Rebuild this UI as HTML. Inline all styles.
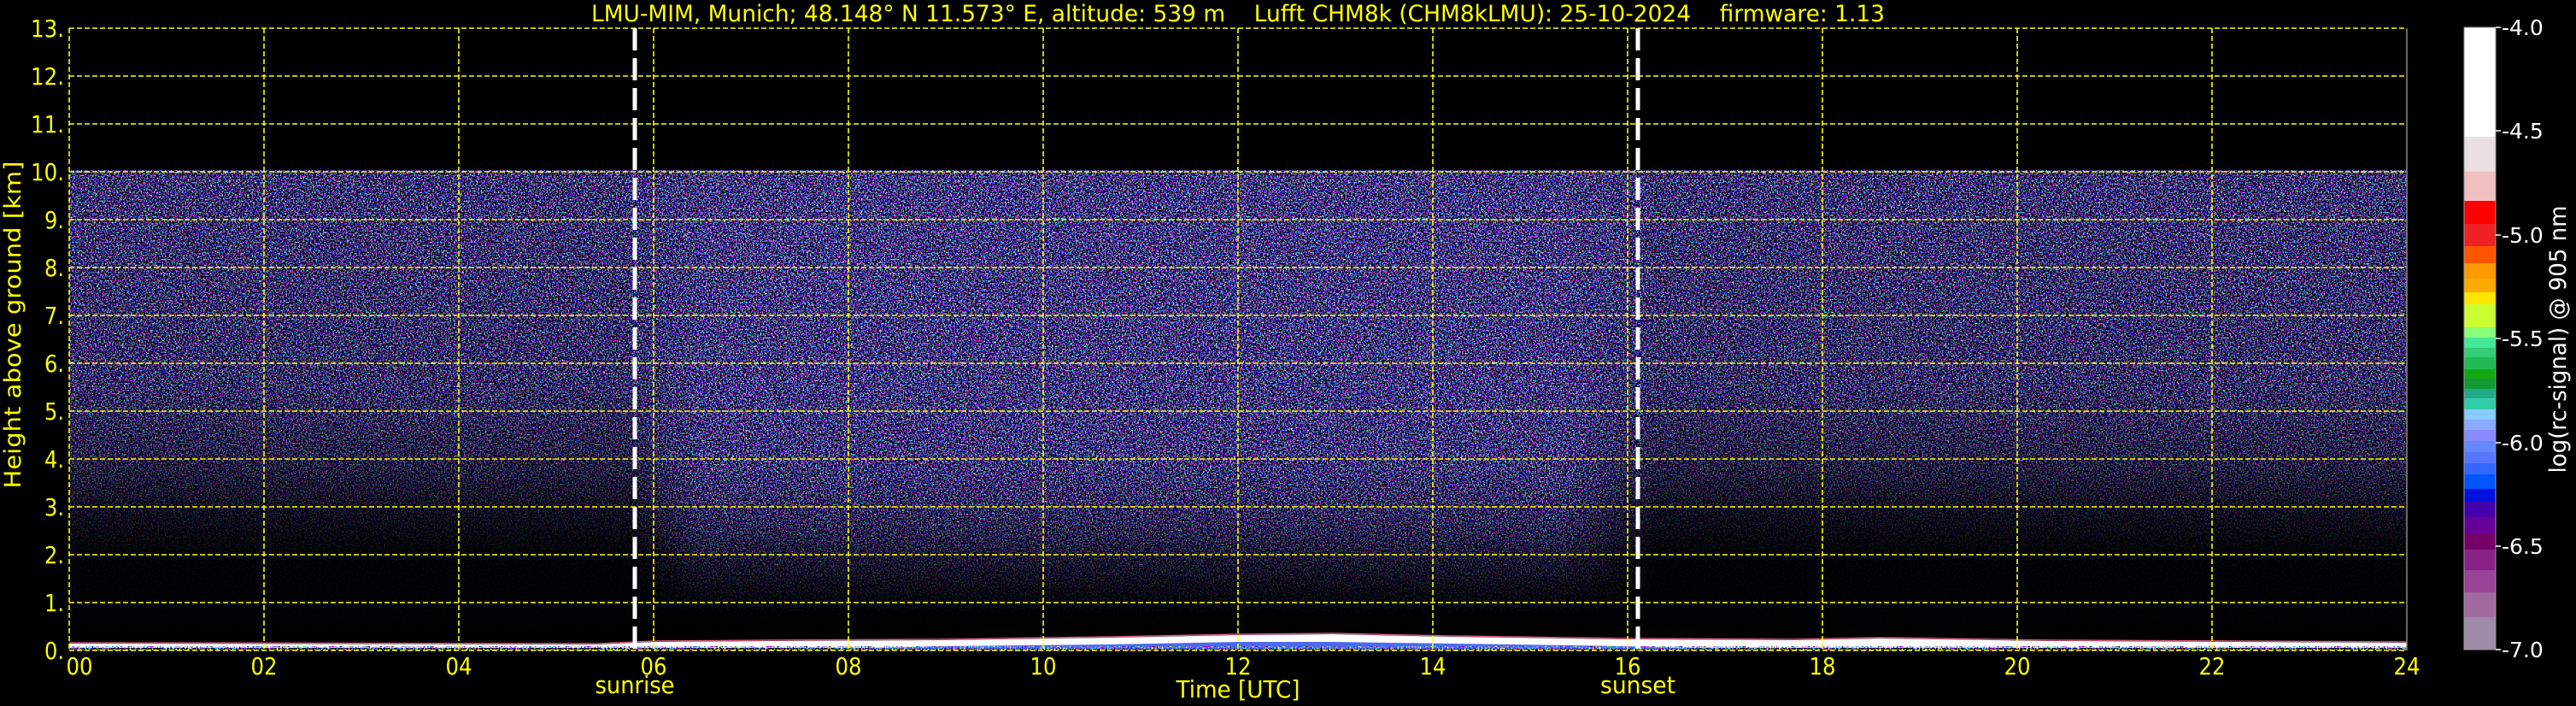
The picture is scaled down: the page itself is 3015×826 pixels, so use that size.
<!DOCTYPE html>
<html><head><meta charset="utf-8"><style>
html,body{margin:0;padding:0;background:#000;width:3015px;height:826px;overflow:hidden}
svg{display:block}
text{font-family:"DejaVu Sans","Liberation Sans",sans-serif}
</style></head><body>
<svg width="3015" height="826" viewBox="0 0 3015 826" xmlns="http://www.w3.org/2000/svg">
<defs>
<filter id="nz" filterUnits="userSpaceOnUse" x="81" y="199" width="2736" height="562" primitiveUnits="userSpaceOnUse" color-interpolation-filters="sRGB">
<feTurbulence type="fractalNoise" baseFrequency="0.6" numOctaves="2" seed="7" result="t"/>
<feColorMatrix in="t" type="matrix" values="3.2 0 0 0 -1.15  0 3.2 0 0 -1.2  0 0 3.2 0 -0.45  0 0 0 10 -4.5"/>
</filter>
<filter id="nz2" filterUnits="userSpaceOnUse" x="81" y="756" width="2736" height="5" primitiveUnits="userSpaceOnUse" color-interpolation-filters="sRGB">
<feTurbulence type="fractalNoise" baseFrequency="0.5" numOctaves="1" seed="3"/>
<feColorMatrix type="matrix" values="4 0 0 0 -1.5  0 4 0 0 -1.5  0 0 4 0 -1  0 0 0 6 -2.5"/>
</filter>
<linearGradient id="gN" gradientUnits="userSpaceOnUse" x1="0" y1="201" x2="0" y2="761">
<stop offset="0" stop-color="#fff"/>
<stop offset="0.45" stop-color="#e0e0e0"/>
<stop offset="0.6" stop-color="#999"/>
<stop offset="0.7" stop-color="#4a4a4a"/>
<stop offset="0.8" stop-color="#0e0e0e"/>
<stop offset="1" stop-color="#000"/>
</linearGradient>
<linearGradient id="gD" gradientUnits="userSpaceOnUse" x1="0" y1="201" x2="0" y2="761">
<stop offset="0" stop-color="#fff"/>
<stop offset="0.6" stop-color="#eee"/>
<stop offset="0.75" stop-color="#999"/>
<stop offset="0.87" stop-color="#2a2a2a"/>
<stop offset="0.93" stop-color="#000"/>
<stop offset="1" stop-color="#000"/>
</linearGradient>
<linearGradient id="hz" gradientUnits="userSpaceOnUse" x1="81" y1="0" x2="2817" y2="0">
<stop offset="0" stop-color="#000"/>
<stop offset="0.24" stop-color="#000"/>
<stop offset="0.27" stop-color="#fff"/>
<stop offset="0.64" stop-color="#fff"/>
<stop offset="0.68" stop-color="#000"/>
<stop offset="1" stop-color="#000"/>
</linearGradient>
<mask id="m" maskUnits="userSpaceOnUse" x="81" y="199" width="2736" height="562">
<rect x="81" y="199" width="2736" height="562" fill="url(#gN)"/>
</mask>
<mask id="m2" maskUnits="userSpaceOnUse" x="81" y="199" width="2736" height="562">
<rect x="81" y="199" width="2736" height="562" fill="url(#gD)"/>
</mask>
<mask id="mh" maskUnits="userSpaceOnUse" x="81" y="199" width="2736" height="562">
<rect x="81" y="199" width="2736" height="562" fill="url(#hz)"/>
</mask>
</defs>
<rect width="3015" height="826" fill="#000"/>
<rect x="81" y="201" width="2736" height="560" fill="#fff" filter="url(#nz)" mask="url(#m)"/>
<g mask="url(#mh)"><rect x="81" y="201" width="2736" height="560" fill="#fff" filter="url(#nz)" mask="url(#m2)"/></g>
<path d="M81,758 L81,753 L700,754 L766,751 L900,750 L1100,749 L1300,746 L1450,743 L1560,742 L1700,745 L1900,748 L2100,749 L2200,747 L2400,750 L2817,752 L2817,758 Z" fill="#fff"/>
<path d="M1000,759 L1100,756 L1300,754 L1450,751 L1560,751 L1700,753 L1900,756 L2000,759 Z" fill="#4a6af0"/>
<polyline points="81,752 700,753 766,750 900,749 1100,748 1300,745 1450,742 1560,741 1700,744 1900,747 2100,748 2200,746 2400,749 2817,751" fill="none" stroke="#d05a7a" stroke-width="1.5"/>
<rect x="81" y="757" width="2736" height="4" fill="#fff" filter="url(#nz2)"/>
<g stroke="#ffff00" stroke-width="1.6" stroke-dasharray="6,3" fill="none">
<path d="M81,33H2817M81,89H2817M81,145H2817M81,201H2817M81,257H2817M81,313H2817M81,369H2817M81,425H2817M81,481H2817M81,537H2817M81,593H2817M81,649H2817M81,705H2817M81,761H2817"/>
<path d="M81,33V761M309,33V761M537,33V761M765,33V761M993,33V761M1221,33V761M1449,33V761M1677,33V761M1905,33V761M2133,33V761M2361,33V761M2589,33V761"/>
</g>
<line x1="2817" y1="33" x2="2817" y2="761" stroke="#8a8a70" stroke-width="1.5"/>
<g stroke="#fff" stroke-width="5" stroke-dasharray="26,9">
<line x1="743" y1="33" x2="743" y2="761"/>
<line x1="1917" y1="33" x2="1917" y2="761"/>
</g>
<text x="692" y="25" fill="#ffff00" font-size="27" textLength="1514" lengthAdjust="spacingAndGlyphs" xml:space="preserve">LMU-MIM, Munich; 48.148° N 11.573° E, altitude: 539 m    Lufft CHM8k (CHM8kLMU): 25-10-2024    firmware: 1.13</text>
<g fill="#ffff00" font-size="28" text-anchor="end">
<text x="75" y="43" textLength="39" lengthAdjust="spacingAndGlyphs">13.</text>
<text x="75" y="99" textLength="39" lengthAdjust="spacingAndGlyphs">12.</text>
<text x="75" y="155" textLength="39" lengthAdjust="spacingAndGlyphs">11.</text>
<text x="75" y="211" textLength="39" lengthAdjust="spacingAndGlyphs">10.</text>
<text x="75" y="267" textLength="23" lengthAdjust="spacingAndGlyphs">9.</text>
<text x="75" y="323" textLength="23" lengthAdjust="spacingAndGlyphs">8.</text>
<text x="75" y="379" textLength="23" lengthAdjust="spacingAndGlyphs">7.</text>
<text x="75" y="435" textLength="23" lengthAdjust="spacingAndGlyphs">6.</text>
<text x="75" y="491" textLength="23" lengthAdjust="spacingAndGlyphs">5.</text>
<text x="75" y="547" textLength="23" lengthAdjust="spacingAndGlyphs">4.</text>
<text x="75" y="603" textLength="23" lengthAdjust="spacingAndGlyphs">3.</text>
<text x="75" y="659" textLength="23" lengthAdjust="spacingAndGlyphs">2.</text>
<text x="75" y="715" textLength="23" lengthAdjust="spacingAndGlyphs">1.</text>
<text x="75" y="771" textLength="23" lengthAdjust="spacingAndGlyphs">0.</text>
</g>
<text transform="translate(24,380) rotate(-90)" fill="#ffff00" font-size="27" text-anchor="middle" textLength="383" lengthAdjust="spacingAndGlyphs">Height above ground [km]</text>
<g fill="#ffff00" font-size="28" text-anchor="middle">
<text x="93" y="789" textLength="31" lengthAdjust="spacingAndGlyphs">00</text>
<text x="309" y="789" textLength="31" lengthAdjust="spacingAndGlyphs">02</text>
<text x="537" y="789" textLength="31" lengthAdjust="spacingAndGlyphs">04</text>
<text x="765" y="789" textLength="31" lengthAdjust="spacingAndGlyphs">06</text>
<text x="993" y="789" textLength="31" lengthAdjust="spacingAndGlyphs">08</text>
<text x="1221" y="789" textLength="31" lengthAdjust="spacingAndGlyphs">10</text>
<text x="1449" y="789" textLength="31" lengthAdjust="spacingAndGlyphs">12</text>
<text x="1677" y="789" textLength="31" lengthAdjust="spacingAndGlyphs">14</text>
<text x="1905" y="789" textLength="31" lengthAdjust="spacingAndGlyphs">16</text>
<text x="2133" y="789" textLength="31" lengthAdjust="spacingAndGlyphs">18</text>
<text x="2361" y="789" textLength="31" lengthAdjust="spacingAndGlyphs">20</text>
<text x="2589" y="789" textLength="31" lengthAdjust="spacingAndGlyphs">22</text>
<text x="2817" y="789" textLength="31" lengthAdjust="spacingAndGlyphs">24</text>
<text x="743" y="811" textLength="93" lengthAdjust="spacingAndGlyphs">sunrise</text>
<text x="1917" y="811" textLength="88" lengthAdjust="spacingAndGlyphs">sunset</text>
<text x="1449" y="816" textLength="145" lengthAdjust="spacingAndGlyphs">Time [UTC]</text>
</g>
<g shape-rendering="crispEdges">
<rect x="2884" y="32" width="37" height="128" fill="#ffffff"/>
<rect x="2884" y="160" width="37" height="41" fill="#ebe0e0"/>
<rect x="2884" y="201" width="37" height="34" fill="#f0c0c0"/>
<rect x="2884" y="235" width="37" height="27" fill="#ff0000"/>
<rect x="2884" y="262" width="37" height="26" fill="#ee2222"/>
<rect x="2884" y="288" width="37" height="20" fill="#ff5500"/>
<rect x="2884" y="308" width="37" height="18" fill="#ff9900"/>
<rect x="2884" y="326" width="37" height="16" fill="#ffaa00"/>
<rect x="2884" y="342" width="37" height="14" fill="#ffe600"/>
<rect x="2884" y="356" width="37" height="27" fill="#ccff33"/>
<rect x="2884" y="383" width="37" height="12" fill="#88ff77"/>
<rect x="2884" y="395" width="37" height="12" fill="#44e899"/>
<rect x="2884" y="407" width="37" height="11" fill="#33cc77"/>
<rect x="2884" y="418" width="37" height="14" fill="#22bb55"/>
<rect x="2884" y="432" width="37" height="11" fill="#11a811"/>
<rect x="2884" y="443" width="37" height="12" fill="#119933"/>
<rect x="2884" y="455" width="37" height="11" fill="#22aa88"/>
<rect x="2884" y="466" width="37" height="13" fill="#33ccaa"/>
<rect x="2884" y="479" width="37" height="12" fill="#88ccff"/>
<rect x="2884" y="491" width="37" height="12" fill="#88aaff"/>
<rect x="2884" y="503" width="37" height="13" fill="#8888ff"/>
<rect x="2884" y="516" width="37" height="13" fill="#6688ff"/>
<rect x="2884" y="529" width="37" height="13" fill="#5577ff"/>
<rect x="2884" y="542" width="37" height="13" fill="#3366ff"/>
<rect x="2884" y="555" width="37" height="17" fill="#0055ff"/>
<rect x="2884" y="572" width="37" height="15" fill="#0011dd"/>
<rect x="2884" y="587" width="37" height="18" fill="#4400aa"/>
<rect x="2884" y="605" width="37" height="20" fill="#660099"/>
<rect x="2884" y="625" width="37" height="18" fill="#770066"/>
<rect x="2884" y="643" width="37" height="24" fill="#882288"/>
<rect x="2884" y="667" width="37" height="26" fill="#994499"/>
<rect x="2884" y="693" width="37" height="29" fill="#a06a9f"/>
<rect x="2884" y="722" width="37" height="38" fill="#a08ca8"/>
</g>
<rect x="2884" y="32" width="37" height="728" fill="none" stroke="#999" stroke-width="1"/>
<g stroke="#fff" stroke-width="1.5">
<path d="M2921,32h6M2921,153h6M2921,275h6M2921,396h6M2921,518h6M2921,639h6M2921,760h6"/>
</g>
<g fill="#fff" font-size="25">
<text x="2928" y="41">-4.0</text>
<text x="2928" y="162">-4.5</text>
<text x="2928" y="284">-5.0</text>
<text x="2928" y="405">-5.5</text>
<text x="2928" y="527">-6.0</text>
<text x="2928" y="648">-6.5</text>
<text x="2928" y="769">-7.0</text>
</g>
<text transform="translate(3003,397) rotate(-90)" fill="#fff" font-size="27" text-anchor="middle" textLength="313" lengthAdjust="spacingAndGlyphs">log(rc-signal) @ 905 nm</text>
</svg>
</body></html>
